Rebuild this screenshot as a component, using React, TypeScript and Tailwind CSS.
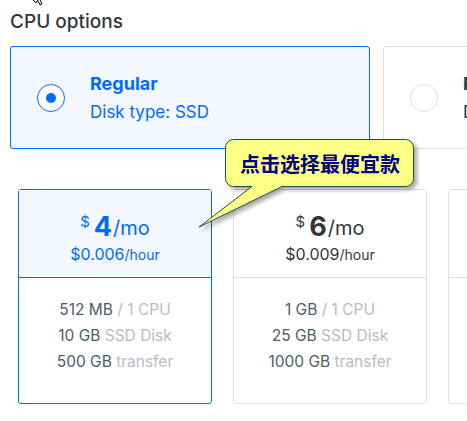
const FONT = { fontFamily: "Inter, 'Liberation Sans', sans-serif" };

type Plan = {
  price: string;
  hourly: string;
  mem: string;
  disk: string;
  transfer: string;
  active?: boolean;
};

const plans: Plan[] = [
  { price: "4", hourly: "0.006", mem: "512 MB", disk: "10 GB", transfer: "500 GB", active: true },
  { price: "6", hourly: "0.009", mem: "1 GB", disk: "25 GB", transfer: "1000 GB" },
  { price: "12", hourly: "0.018", mem: "2 GB", disk: "50 GB", transfer: "2 TB" },
];

const CpuCard = ({
  title,
  sub,
  active,
}: {
  title: string;
  sub: string;
  active?: boolean;
}) => (
  <div
    className={`flex items-center shrink-0 w-[360px] h-[103px] rounded-[3px] border ${
      active ? "border-[#0069ff] bg-[#f3f8ff]" : "border-[#dfdfdf] bg-white"
    }`}
  >
    <div
      className={`ml-[26px] shrink-0 w-[28px] h-[28px] rounded-full border flex items-center justify-center bg-white ${
        active ? "border-[#0069ff]" : "border-[#dfdfdf]"
      }`}
    >
      {active && <div className="w-[10px] h-[10px] rounded-full bg-[#0069ff]" />}
    </div>
    <div className={`ml-[25px] whitespace-nowrap ${active ? "text-[#0069ff]" : "text-[#31373d]"}`}>
      <div className="text-[18px] font-bold leading-[22px]">{title}</div>
      <div className="text-[17px] leading-[22px] mt-[6px]">{sub}</div>
    </div>
  </div>
);

const PlanCard = ({ plan }: { plan: Plan }) => (
  <div
    className={`shrink-0 w-[194px] h-[215px] rounded-[3px] border flex flex-col ${
      plan.active ? "border-[#0069ff]" : "border-[#dfdfdf]"
    }`}
  >
    <div
      className={`h-[88px] flex flex-col items-center justify-center border-b whitespace-nowrap ${
        plan.active
          ? "bg-[#f3f8ff] border-[#0069ff] text-[#0069ff]"
          : "bg-white border-[#dfdfdf] text-[#31373d]"
      }`}
    >
      <div className="flex items-start leading-none mt-[8px]">
        <span className="text-[15px] mt-[0px] mr-[4px]">$</span>
        <span className="text-[27px] font-bold leading-[26px]">{plan.price}</span>
        <span className="text-[20px] mt-[4px] ml-[1px]">/mo</span>
      </div>
      <div className="mt-[6px] leading-none">
        <span className="text-[16px]">${plan.hourly}</span>
        <span className="text-[14px]">/hour</span>
      </div>
    </div>
    <div className="flex-1 flex flex-col items-center pt-[19px] text-[15.5px] leading-[26px] text-[#4d5b69] whitespace-nowrap">
      <div>
        {plan.mem} <span className="text-[#b5bcc3]">/ 1 CPU</span>
      </div>
      <div>
        {plan.disk} <span className="text-[#b5bcc3]">SSD Disk</span>
      </div>
      <div>
        {plan.transfer} <span className="text-[#b5bcc3]">transfer</span>
      </div>
    </div>
  </div>
);

const Callout = () => (
  <div className="absolute left-[196px] top-[136px] w-[224px] h-[96px] pointer-events-none">
    <svg width="224" height="96" viewBox="0 0 224 96" className="absolute inset-0 overflow-visible">
      <defs>
        <filter id="sh" x="-10%" y="-10%" width="130%" height="140%">
          <feDropShadow dx="3" dy="3" stdDeviation="2" floodColor="#000" floodOpacity="0.35" />
        </filter>
      </defs>
      <path
        d="M37.5 3.5 H209.5 a8 8 0 0 1 8 8 V42.5 a8 8 0 0 1 -8 8 H86 L3 91 L56 50.5 H37.5 a8 8 0 0 1 -8 -8 V11.5 a8 8 0 0 1 8 -8 Z"
        fill="#ffff88"
        stroke="#1f4f3f"
        strokeWidth="1"
        filter="url(#sh)"
      />
    </svg>
    <div
      className="absolute left-[30px] top-[15px] w-[188px] text-center text-[20px] leading-[26px] font-bold text-[#000080]"
      style={{ fontFamily: "'Noto Sans CJK SC', sans-serif" }}
    >
      点击选择最便宜款
    </div>
  </div>
);

// tail end of the mouse cursor peeking in at the top
const CursorTip = () => (
  <svg width="12" height="6" viewBox="0 0 12 6" className="absolute left-[32px] top-0">
    <path d="M1 0 L4 3 L6 0 M6 1 L8 5 L10 4 L8 0" fill="#fff" stroke="#000" strokeWidth="1" />
  </svg>
);

export default function App() {
  return (
    <div className="relative w-[467px] h-[421px] overflow-hidden bg-white" style={FONT}>
      <div className="pl-[10px] pt-[9px]">
        <h2 className="text-[19px] leading-[26px] text-[#31373d] font-medium">CPU options</h2>
        <div className="flex gap-[13px] mt-[11px]">
          <CpuCard title="Regular" sub="Disk type: SSD" active />
          <CpuCard title="Premium Intel" sub="Disk type: NVMe SSD" />
        </div>
        <div className="flex gap-[21px] mt-[40px] ml-[8px]">
          {plans.map((p) => (
            <PlanCard key={p.price} plan={p} />
          ))}
        </div>
      </div>
      <Callout />
      <CursorTip />
    </div>
  );
}
